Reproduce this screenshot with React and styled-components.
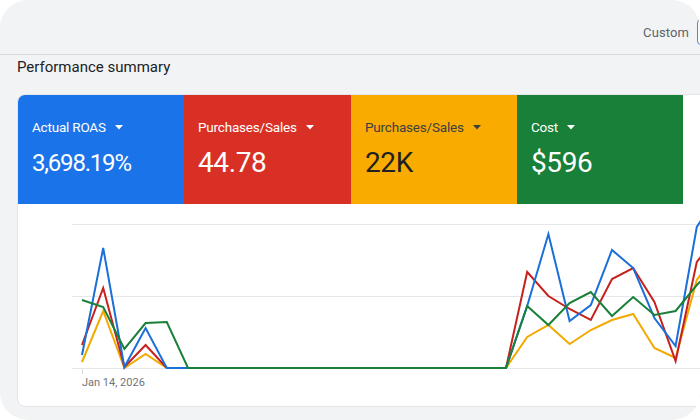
import React from "react";
import styled, { createGlobalStyle } from "styled-components";

const GlobalStyle = createGlobalStyle`
  html, body { margin: 0; padding: 0; background: #ffffff; }
  body { font-family: Roboto, "Liberation Sans", Arial, sans-serif; }
  * { box-sizing: border-box; }
`;

const Frame = styled.div`
  width: 700px;
  height: 420px;
  background: #f1f3f4;
  border-radius: 28px;
  overflow: hidden;
  display: flex;
  flex-direction: column;
`;

const Header = styled.header`
  height: 55px;
  flex: none;
  padding-top: 10px;
  border-bottom: 1px solid #dadce0;
  display: flex;
  align-items: center;
  justify-content: flex-end;
  gap: 8px;
`;

const HeaderLabel = styled.span`
  font-size: 13px;
  color: #5f6368;
  letter-spacing: 0.1px;
`;

const RangeButton = styled.div`
  width: 120px;
  height: 26px;
  margin-right: -117px;
  flex: none;
  border: 1px solid #5b86c9;
  border-radius: 4px;
  background: #f8f9fa;
`;

const Title = styled.h2`
  margin: 2px 0 17px 17px;
  font-size: 15px;
  line-height: 20px;
  font-weight: 400;
  color: #202124;
`;

const Card = styled.section`
  margin-left: 17px;
  width: 700px;
  height: 313px;
  flex: none;
  background: #ffffff;
  border: 1px solid #e3e5e8;
  border-radius: 8px;
  overflow: hidden;
  display: flex;
  flex-direction: column;
`;

const Tiles = styled.div`
  display: flex;
  height: 109px;
  flex: none;
`;

const Tile = styled.div`
  width: ${(p) => p.$w || 166}px;
  flex: none;
  background: ${(p) => p.$bg};
  color: ${(p) => p.$fg};
  padding: 22px 0 0 14px;
  display: flex;
  flex-direction: column;
  gap: 10px;
`;

const Label = styled.div`
  display: flex;
  align-items: center;
  gap: 9px;
  font-size: 13.5px;
  line-height: 20px;
  letter-spacing: -0.2px;
  color: ${(p) => p.$fg};
`;

const Value = styled.div`
  font-size: ${(p) => (p.$small ? 24 : 28)}px;
  line-height: 32px;
  letter-spacing: ${(p) => (p.$small ? -1.2 : -0.4)}px;
  color: ${(p) => p.$fg};
`;

const ChartArea = styled.div`
  flex: 1;
`;

const Caret = ({ color }) => (
  <svg width="8" height="5" viewBox="0 0 8 5">
    <polygon points="0,0 8,0 4,4.6" fill={color} />
  </svg>
);

const tiles = [
  { label: "Actual ROAS", value: "3,698.19%", bg: "#1a73e8", fg: "#ffffff", w: 166, small: true },
  { label: "Purchases/Sales", value: "44.78", bg: "#d93025", fg: "#ffffff", w: 167 },
  { label: "Purchases/Sales", value: "22K", bg: "#f9ab00", fg: "#3c4043", vfg: "#202124", w: 166 },
  { label: "Cost", value: "$596", bg: "#188038", fg: "#ffffff", w: 166 },
];

const flat = (n) => Array(n).fill(368);
const series = {
  yellow: [362, 311, 368, 354, 368, 368, ...flat(15), 337, 325, 344, 330, 320, 314, 348, 358, 280, 250],
  red: [345, 288, 367, 345, 368, 368, ...flat(15), 272, 296, 309, 320, 279, 268, 302, 361, 262, 235],
  blue: [355, 248, 367, 328, 368, 368, ...flat(15), 306, 234, 321, 305, 250, 268, 318, 346, 227, 195],
  green: [300, 307, 349, 323, 322, 368, ...flat(15), 306, 325, 303, 292, 316, 297, 315, 311, 285, 265],
};
const colors = { yellow: "#f2a900", red: "#c5221f", blue: "#1a6fd8", green: "#188038" };

const toPoints = (arr) =>
  arr.map((y, i) => `${(64 + 21.2 * i).toFixed(1)},${y - 204}`).join(" ");

function Chart() {
  return (
    <svg width="683" height="202" viewBox="0 0 683 202" style={{ display: "block" }}>
      {[20, 92, 164].map((y) => (
        <line key={y} x1="54" x2="683" y1={y + 0.5} y2={y + 0.5} stroke="#e6e7ea" strokeWidth="1.2" />
      ))}
      <line x1="64.5" x2="64.5" y1="165" y2="170" stroke="#dadce0" strokeWidth="1" />
      {Object.keys(series).map((k) => (
        <polyline
          key={k}
          points={toPoints(series[k])}
          fill="none"
          stroke={colors[k]}
          strokeWidth="2"
          strokeLinejoin="miter"
        />
      ))}
      <text x="64" y="182" fontSize="11" fill="#70757a" fontFamily="Roboto, 'Liberation Sans', sans-serif">
        Jan 14, 2026
      </text>
    </svg>
  );
}

export default function App() {
  return (
    <>
      <GlobalStyle />
      <Frame>
        <Header>
          <HeaderLabel>Custom</HeaderLabel>
          <RangeButton />
        </Header>
        <Title>Performance summary</Title>
        <Card>
          <Tiles>
            {tiles.map((t, i) => (
              <Tile key={i} $bg={t.bg} $fg={t.fg} $w={t.w}>
                <Label $fg={t.fg}>
                  {t.label}
                  <Caret color={t.fg} />
                </Label>
                <Value $fg={t.vfg || t.fg} $small={t.small}>{t.value}</Value>
              </Tile>
            ))}
            <Tile $bg="#ffffff" $fg="#202124" $w={200} />
          </Tiles>
          <ChartArea>
            <Chart />
          </ChartArea>
        </Card>
      </Frame>
    </>
  );
}
